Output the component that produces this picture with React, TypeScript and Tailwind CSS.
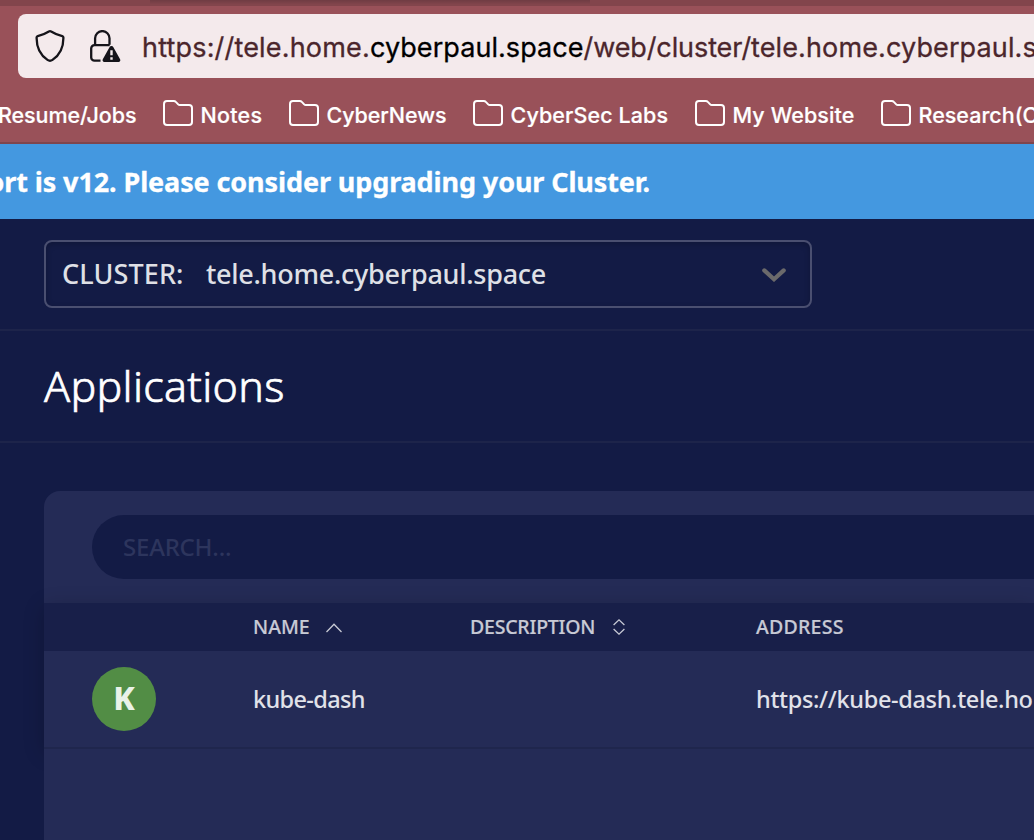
import type { ReactNode } from "react";

function ShieldIcon() {
  return (
    <svg className="h-8 w-8 shrink-0" viewBox="0 0 32 32" fill="none" stroke="#15141a" strokeWidth="2.3" strokeLinejoin="round">
      <path d="M14.900 1.500a2.200 2.200 0 0 1 2.200 0c3.600 2.200 7.400 3.800 11.200 4.700.7.200 1.100.7 1.100 1.400.1 11.200-3.900 17.600-10.900 22.300-1.600 1.100-3.400 1.100-5 0C6.500 25.200 2.500 18.800 2.600 7.600c0-.7.4-1.200 1.100-1.400 3.800-.9 7.600-2.500 11.200-4.700z" />
    </svg>
  );
}

function InsecureLockIcon() {
  return (
    <svg className="h-8 w-[31px] shrink-0" viewBox="0 0 31 32" fill="none">
      <path d="M5.100 14.800V8.300a7.200 7.200 0 0 1 14.400 0v6.500" stroke="#15141a" strokeWidth="2.300" />
      <path d="M10.500 30.700H4.500A3.300 3.300 0 0 1 1.200 27.400V18.500A3.300 3.300 0 0 1 4.500 15.200h15.200" stroke="#15141a" strokeWidth="2.300" />
      <path d="M19.500 17.300a2.200 2.200 0 0 1 3.900 0l6.700 12c.7 1.400-.1 2.600-1.500 2.600H14.300c-1.400 0-2.200-1.200-1.500-2.600z" fill="#15141a" />
      <path d="M21.500 20.200v5M21.500 27.300v2.400" stroke="#f4eaec" strokeWidth="2.400" />
    </svg>
  );
}

function FolderIcon() {
  return (
    <svg className="-mt-px mb-px h-[26px] w-[30px] shrink-0" viewBox="0 0 30 26" fill="none" stroke="#fff" strokeWidth="2" strokeLinejoin="round">
      <path d="M4 1h6.800c.8 0 1.500.3 2 .9l2.400 2.500c.4.4.9.6 1.500.6H26a3 3 0 0 1 3 3v14a3 3 0 0 1-3 3H4a3 3 0 0 1-3-3V4a3 3 0 0 1 3-3z" />
    </svg>
  );
}

function Bookmark({ className, children }: { className: string; children: ReactNode }) {
  return (
    <div className={`flex shrink-0 items-center gap-[7.5px] ${className}`}>
      <FolderIcon />
      <span className="pt-[3px]">{children}</span>
    </div>
  );
}

function BrowserChrome() {
  return (
    <header className="flex h-36 shrink-0 flex-col border-b-2 border-[#7f454d] bg-[#995159] font-['Inter',sans-serif]">
      <div className="flex h-1.5 shrink-0 bg-[#82454c]">
        <div className="ml-[150px] h-1 w-[440px] bg-linear-to-b from-[#6f3c43] to-[#80444b]" />
      </div>
      <div className="mt-2 ml-[18px] flex h-16 shrink-0 items-center rounded-l-lg bg-[#f4eaec] pl-4">
        <ShieldIcon />
        <div className="ml-6 flex">
          <InsecureLockIcon />
        </div>
        <div className="ml-[21px] flex shrink-0 pt-[3px] text-[27px] leading-8 whitespace-nowrap text-[#4b262c] [-webkit-text-stroke:0.3px_currentColor]">
          <span className="tracking-[0.18px]">https://tele.home.</span>
          <span className="tracking-[0.06px] text-black">cyberpaul.space</span>
          <span className="tracking-[-0.1px]">/web/cluster/</span>
          <span className="tracking-[0.12px]">tele.home.cyberpaul.s</span>
        </div>
      </div>
      <nav className="flex h-16 shrink-0 items-center pt-[7px] text-[21.5px] leading-7 font-medium whitespace-nowrap text-white [-webkit-text-stroke:0.2px_currentColor]">
        <span className="-ml-0.5 w-[165px] shrink-0 pt-[3px] tracking-[-0.08px]">Resume/Jobs</span>
        <Bookmark className="w-[126px] tracking-[0.25px]">Notes</Bookmark>
        <Bookmark className="w-[184px] tracking-[-0.1px]">CyberNews</Bookmark>
        <Bookmark className="w-[222px] tracking-[0.09px]">CyberSec Labs</Bookmark>
        <Bookmark className="w-[186px] tracking-[0.09px]">My Website</Bookmark>
        <Bookmark className="">Research(C</Bookmark>
      </nav>
    </header>
  );
}

function UpgradeBanner() {
  return (
    <div className="flex h-[75px] shrink-0 items-center bg-[#4498e0] text-[27px] font-bold tracking-[-0.11px] whitespace-nowrap text-white [-webkit-text-stroke:0.3px_currentColor]">
      <div className="flex w-[650px] justify-end pt-px">ort is v12. Please consider upgrading your Cluster.</div>
    </div>
  );
}

function ClusterBar() {
  return (
    <div className="flex h-28 shrink-0 items-start border-b-2 border-[#1d244a] pt-[21px] pl-11">
      <div className="flex h-[68px] w-[768px] items-center rounded-lg border-2 border-[#4a4f70] pr-6 pl-4 text-[27px] font-medium text-[#dfe0e6] shadow-[inset_0_2px_6px_rgba(0,0,0,0.2)]">
        <span className="w-[144px] tracking-[0.1px]">CLUSTER:</span>
        <span className="tracking-[-0.27px]">tele.home.cyberpaul.space</span>
        <svg className="mt-0.5 ml-auto h-[14px] w-6" viewBox="0 0 24 14" fill="none" stroke="#6b6a6b" strokeWidth="4.200" strokeLinecap="round" strokeLinejoin="miter">
          <path d="M2.300 2.400 12 11.200l9.700-8.800" />
        </svg>
      </div>
    </div>
  );
}

function ApplicationsTable() {
  return (
    <section className="mt-12 ml-11 flex flex-1 flex-col rounded-tl-2xl bg-[#242b56] pt-6">
      <div className="ml-12 flex h-16 shrink-0 items-center rounded-l-full bg-[#131b45] pl-[31px] text-[24px] font-medium tracking-[-0.22px] text-[#2d355d]">
        SEARCH...
      </div>
      <div className="mt-6 shadow-[0_4px_20px_rgba(0,0,0,0.2)]">
        <div className="grid h-12 grid-cols-[209px_217px_286px_1fr] items-center bg-[#181f49] text-[19.5px] font-medium whitespace-nowrap text-[#c8cad5] [-webkit-text-stroke:0.2px_currentColor]">
          <span />
          <span className="flex items-center">
            <span className="w-[73px]">NAME</span>
            <svg className="mt-0.5 h-2.5 w-4" viewBox="0 0 16 10" fill="none" stroke="currentColor" strokeWidth="1.300">
              <path d="M.5 9 8 1.300 15.500 9" />
            </svg>
          </span>
          <span className="flex items-center">
            <span className="w-[143px] tracking-[-0.22px]">DESCRIPTION</span>
            <svg className="h-4 w-3" viewBox="0 0 12 16" fill="none" stroke="currentColor" strokeWidth="1.300">
              <path d="M.6 6 6 .9 11.400 6M.6 10 6 15.100 11.400 10" />
            </svg>
          </span>
          <span className="tracking-[0.25px]">ADDRESS</span>
        </div>
        <div className="grid h-[98px] grid-cols-[209px_503px_1fr] items-center border-b-2 border-[#1f264d] bg-[#242b56] text-[23.5px] font-medium whitespace-nowrap text-[#e1e2e9]">
          <span className="ml-12 flex h-16 w-16 items-center justify-center rounded-full bg-[#528d45] pb-0.5 text-[32px] font-extrabold text-[#e9f2e8]">K</span>
          <span className="pt-px tracking-[-0.65px]">kube-dash</span>
          <span className="w-0 pt-px tracking-[-0.34px]">https://kube-dash.tele.ho</span>
        </div>
      </div>
      <div className="relative flex-1 bg-[#242b56]" />
    </section>
  );
}

export default function App() {
  return (
    <div className="flex h-[840px] w-[1034px] flex-col overflow-hidden bg-[#131b45] font-['Noto_Sans',sans-serif]">
      <BrowserChrome />
      <UpgradeBanner />
      <ClusterBar />
      <div className="flex h-28 shrink-0 items-center border-b-2 border-[#1d244a] pl-11 text-[43px] font-light tracking-[0.3px] text-white [-webkit-text-stroke:0.7px_currentColor]">
        <h1>Applications</h1>
      </div>
      <ApplicationsTable />
    </div>
  );
}
